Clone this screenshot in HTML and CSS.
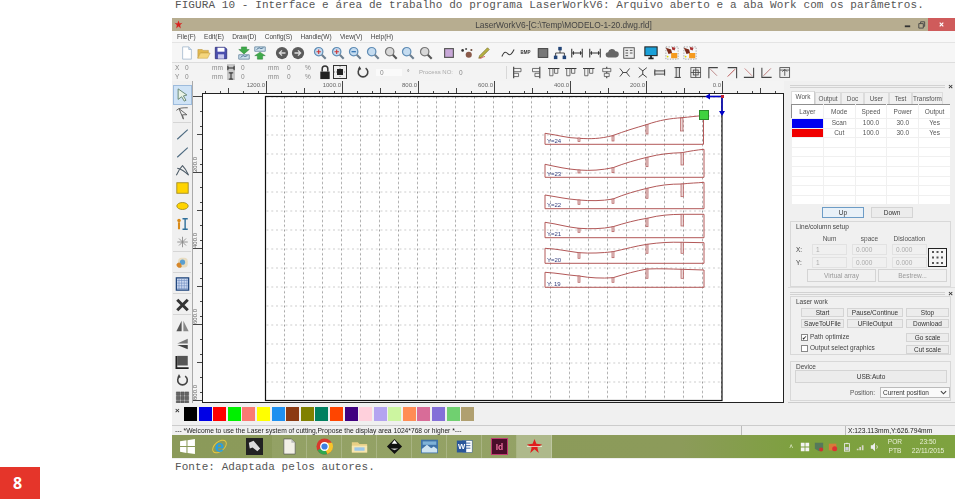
FILE: index.html
```html
<!DOCTYPE html>
<html lang="pt">
<head>
    <meta charset="UTF-8">
    <title>LaserWorkV6</title>
    <link rel="stylesheet" href="styles.css">
</head>
<body>
<svg class="defs" aria-hidden="true">
    <symbol id="i-new" viewBox="0 0 16 16"><path d="M3 1h7l3 3v11H3z" fill="#fff" stroke="#a9bdd0"/><path d="M10 1v3h3" fill="#cfe3f5" stroke="#a9bdd0"/></symbol>
    <symbol id="i-open" viewBox="0 0 16 16"><path d="M1 4h5l1 1h6v3H4l-3 6z" fill="#e2b94f" stroke="#b8923a" stroke-width=".6"/><path d="M4 8h11l-3 6H1z" fill="#f5d67c" stroke="#c9a344" stroke-width=".6"/></symbol>
    <symbol id="i-save" viewBox="0 0 16 16"><path d="M1.500 1.500h11l2 2v11h-13z" fill="#4b4fae" stroke="#33357f"/><rect x="4" y="2" width="8" height="4.500" fill="#fff"/><rect x="4.500" y="9.500" width="7" height="5" fill="#c9c9ee"/></symbol>
    <symbol id="i-imp" viewBox="0 0 16 16"><path d="M5 1h6v3h3l-6 5-6-5h3z" fill="#3faa4a" stroke="#1f7a2c" stroke-width=".5"/><path d="M2 10h12v5H2z" fill="#cfe2ee" stroke="#6c8ba3"/><path d="M4 13l3-2 2 1 3-1" fill="none" stroke="#40688a"/></symbol>
    <symbol id="i-exp" viewBox="0 0 16 16"><path d="M2 1h12v5H2z" fill="#cfe2ee" stroke="#6c8ba3"/><path d="M4 4l3-2 2 1 3-1" fill="none" stroke="#40688a"/><path d="M8 7l6 4h-3v4H5v-4H2z" fill="#3faa4a" stroke="#1f7a2c" stroke-width=".5"/></symbol>
    <symbol id="i-back" viewBox="0 0 16 16"><circle cx="8" cy="8" r="7" fill="#5b5b5b"/><path d="M12 8H5M8 5L5 8l3 3" fill="none" stroke="#ddd" stroke-width="1.500"/></symbol>
    <symbol id="i-fwd" viewBox="0 0 16 16"><circle cx="8" cy="8" r="7" fill="#5b5b5b"/><path d="M4 8h7M8 5l3 3-3 3" fill="none" stroke="#ddd" stroke-width="1.500"/></symbol>
    <symbol id="i-mag" viewBox="0 0 16 16"><circle cx="6.500" cy="6.500" r="4.800" fill="#c5dcf0" stroke="#5f8cb5" stroke-width="1.400"/><path d="M10 10l4.500 4.500" stroke="#6d7f90" stroke-width="2.400"/></symbol>
    <symbol id="i-magp" viewBox="0 0 16 16"><use href="#i-mag"/><path d="M4 6.500h5M6.500 4v5" stroke="#c33" stroke-width="1.200"/></symbol>
    <symbol id="i-magm" viewBox="0 0 16 16"><use href="#i-mag"/><path d="M4 6.500h5" stroke="#2c6fb0" stroke-width="1.400"/></symbol>
    <symbol id="i-magg" viewBox="0 0 16 16"><circle cx="6.500" cy="6.500" r="4.800" fill="#d8d8d8" stroke="#777" stroke-width="1.400"/><path d="M10 10l4.500 4.500" stroke="#555" stroke-width="2.400"/></symbol>
    <symbol id="i-rect" viewBox="0 0 16 16"><rect x="3" y="3" width="10" height="10" fill="#c8a8d8" stroke="#555" stroke-width="1.300"/></symbol>
    <symbol id="i-paw" viewBox="0 0 16 16"><circle cx="10" cy="10" r="3.500" fill="#8a5a4a"/><circle cx="3" cy="5" r="1.500" fill="#333"/><circle cx="7" cy="3.500" r="1.200" fill="#555"/><circle cx="13" cy="4.500" r="1.200" fill="#6a4a3a"/></symbol>
    <symbol id="i-pen" viewBox="0 0 16 16"><path d="M2 14l3-1 9-9-2-2-9 9z" fill="#b8b040" stroke="#6b6620" stroke-width=".7"/><path d="M3 14c3 0 4-2 6-2" fill="none" stroke="#c44" stroke-width="1"/></symbol>
    <symbol id="i-curve" viewBox="0 0 16 16"><path d="M1 12c3-7 5-5 7-3s4 1 7-5" fill="none" stroke="#3a3a3a" stroke-width="1.200"/></symbol>
    <symbol id="i-sq" viewBox="0 0 16 16"><rect x="2.500" y="3" width="11" height="10" fill="#777" stroke="#333"/></symbol>
    <symbol id="i-tree" viewBox="0 0 16 16"><path d="M8 3v5M3 13V8h10v5" fill="none" stroke="#333"/><rect x="6" y="1" width="4" height="4" fill="#247"/><rect x="1" y="11" width="4" height="4" fill="#247"/><rect x="11" y="11" width="4" height="4" fill="#247"/></symbol>
    <symbol id="i-hdim" viewBox="0 0 16 16"><path d="M2 3v10M14 3v10M2 8h12M4 6v4M12 6v4" fill="none" stroke="#333" stroke-width="1.200"/></symbol>
    <symbol id="i-cloud" viewBox="0 0 16 16"><path d="M4 13a3 3 0 0 1-.5-6 4.500 4.500 0 0 1 8.500-1 3.500 3.500 0 0 1 .5 7z" fill="#666"/></symbol>
    <symbol id="i-list" viewBox="0 0 16 16"><rect x="2" y="2" width="12" height="12" fill="#eee" stroke="#444"/><path d="M4 5h3M4 8h3M4 11h3M9 5h3M9 8h3" stroke="#444"/></symbol>
    <symbol id="i-mon" viewBox="0 0 16 16"><rect x="1" y="1" width="14" height="10" fill="#1aa0d8" stroke="#222" stroke-width="1.200"/><path d="M5 14h6M8 11v3" stroke="#222" stroke-width="2"/></symbol>
    <symbol id="i-org" viewBox="0 0 16 16"><path d="M1 1h14v14H1z" fill="none" stroke="#999" stroke-dasharray="1.500 1.500"/><rect x="7" y="8" width="7" height="6" fill="#f59a1e"/><path d="M1 2l6 2 1 4-4 1z" fill="#7b2b1a"/><path d="M8 1l4 1-1 3-3-1z" fill="#a33"/><circle cx="3" cy="12" r="1" fill="#dd0"/></symbol>
    <symbol id="a-1" viewBox="0 0 16 16"><path d="M3 1v14" stroke="#333" stroke-width="1.300"/><path d="M3 3h9v4H3M3 9h6v4H3" fill="none" stroke="#555"/></symbol>
    <symbol id="a-2" viewBox="0 0 16 16"><path d="M13 1v14" stroke="#333" stroke-width="1.300"/><path d="M13 3H4v4h9M13 9H7v4h6" fill="none" stroke="#555"/></symbol>
    <symbol id="a-3" viewBox="0 0 16 16"><path d="M1 3h14" stroke="#333" stroke-width="1.300"/><path d="M3 3v9h4V3M9 3v6h4V3" fill="none" stroke="#555"/></symbol>
    <symbol id="a-4" viewBox="0 0 16 16"><path d="M8 1v14" stroke="#333" stroke-width="1.300"/><path d="M3 3h10v4H3zM5 9h6v4H5z" fill="#eee" stroke="#555"/></symbol>
    <symbol id="a-5" viewBox="0 0 16 16"><path d="M2 3l4 5-4 5M14 3l-4 5 4 5M5 8h6" fill="none" stroke="#444" stroke-width="1.200"/></symbol>
    <symbol id="a-6" viewBox="0 0 16 16"><path d="M3 2l5 4 5-4M3 14l5-4 5 4M8 5v6" fill="none" stroke="#444" stroke-width="1.200"/></symbol>
    <symbol id="a-7" viewBox="0 0 16 16"><path d="M2 4v8M14 4v8" stroke="#333"/><rect x="2" y="6" width="12" height="4" fill="#ddd" stroke="#333"/></symbol>
    <symbol id="a-8" viewBox="0 0 16 16"><path d="M4 2h8M4 14h8" stroke="#333"/><rect x="6" y="2" width="4" height="12" fill="#ddd" stroke="#333"/></symbol>
    <symbol id="a-9" viewBox="0 0 16 16"><rect x="2" y="2" width="12" height="12" fill="#eee" stroke="#444"/><path d="M8 2v12M2 8h12" stroke="#444"/><rect x="5" y="5" width="6" height="6" fill="none" stroke="#444"/></symbol>
    <symbol id="c-1" viewBox="0 0 16 16"><path d="M2 15V2h11" fill="none" stroke="#444" stroke-width="1.300"/><path d="M4 4l8 8" stroke="#b88" stroke-width="1.200"/></symbol>
    <symbol id="c-2" viewBox="0 0 16 16"><path d="M3 2h11v13" fill="none" stroke="#444" stroke-width="1.300"/><path d="M12 4l-9 9" stroke="#b55" stroke-width="1.200"/></symbol>
    <symbol id="c-3" viewBox="0 0 16 16"><path d="M14 2v12H2" fill="none" stroke="#444" stroke-width="1.300"/><path d="M3 3l9 9" stroke="#c88" stroke-width="1.200"/></symbol>
    <symbol id="c-4" viewBox="0 0 16 16"><path d="M2 2v12h12" fill="none" stroke="#444" stroke-width="1.300"/><path d="M13 3l-9 9" stroke="#b77" stroke-width="1.200"/></symbol>
    <symbol id="c-5" viewBox="0 0 16 16"><rect x="2" y="2" width="12" height="12" fill="#eee" stroke="#444"/><path d="M8 12V5M5 7l3-3 3 3M2 5h12" fill="none" stroke="#444"/></symbol>
    <symbol id="t-sel" viewBox="0 0 16 16"><path d="M3 1l10 7-4 1 3 5-2 1-3-5-4 3z" fill="#e9f3e6" stroke="#5e7f6a"/></symbol>
    <symbol id="t-node" viewBox="0 0 16 16"><path d="M4 3l9 7-5 0 1 5-5-12z" fill="#eee" stroke="#555"/><path d="M1 5c3-3 7-3 13-3" fill="none" stroke="#555"/></symbol>
    <symbol id="t-line" viewBox="0 0 16 16"><path d="M2 14L14 3" stroke="#4c6a80" stroke-width="1.300"/></symbol>
    <symbol id="t-cross" viewBox="0 0 16 16"><path d="M1 14C4 7 8 3 8 3s4 4 7 11M2 6c5 1 9 4 13 8" fill="none" stroke="#4c5a66" stroke-width="1.200"/></symbol>
    <symbol id="t-yrect" viewBox="0 0 16 16"><rect x="1.500" y="2" width="13" height="12" fill="#ffd400" stroke="#a08a20"/></symbol>
    <symbol id="t-ell" viewBox="0 0 16 16"><ellipse cx="8" cy="8" rx="6.500" ry="4" fill="#ffd400" stroke="#a08a20"/></symbol>
    <symbol id="t-text" viewBox="0 0 16 16"><circle cx="4" cy="4" r="2" fill="#d98b1a"/><path d="M4 6v8" stroke="#d98b1a" stroke-width="2.400"/><path d="M8 2h6M8 14h6M11 2v12" stroke="#2f6f9a" stroke-width="1.600"/></symbol>
    <symbol id="t-star" viewBox="0 0 16 16"><path d="M8 2v12M2 8h12M4 4l8 8M12 4l-8 8" stroke="#8a8a8a"/></symbol>
    <symbol id="t-pic" viewBox="0 0 16 16"><rect x="3" y="2" width="11" height="11" rx="4" fill="#e8dcc0"/><circle cx="8" cy="7" r="3" fill="#5a9fd0"/><path d="M1 10c2-4 5-3 6 1 1 3-5 4-6-1z" fill="#d6872a"/></symbol>
    <symbol id="t-grid" viewBox="0 0 16 16"><rect x="1" y="1" width="14" height="14" fill="#cfdcf2" stroke="#23487f" stroke-width="1.500"/><path d="M4 2v12M7 2v12M10 2v12M13 2v12M2 4h12M2 7h12M2 10h12M2 13h12" stroke="#6f8cc0" stroke-width=".7"/></symbol>
    <symbol id="t-x" viewBox="0 0 16 16"><path d="M2 2l12 12M14 2L2 14" stroke="#333" stroke-width="3.400"/></symbol>
    <symbol id="t-mir" viewBox="0 0 16 16"><path d="M7 2v12H1z" fill="#555"/><path d="M9 2v12h6z" fill="#888"/></symbol>
    <symbol id="t-mir2" viewBox="0 0 16 16"><path d="M14 2v5.500H2z" fill="#777"/><path d="M14 14V9H2z" fill="#444"/></symbol>
    <symbol id="t-l" viewBox="0 0 16 16"><path d="M2 1h12v11H2z" fill="#555"/><path d="M1 1v14h14" fill="none" stroke="#222" stroke-width="2"/></symbol>
    <symbol id="t-rot" viewBox="0 0 16 16"><path d="M11 3.500a5.500 5.500 0 1 1-6 0" fill="none" stroke="#444" stroke-width="1.800"/><path d="M4 1l2 4-4 0z" fill="#444"/></symbol>
    <symbol id="t-arr" viewBox="0 0 16 16"><path d="M1 1h4v4H1zM6 1h4v4H6zM11 1h4v4h-4zM1 6h4v4H1zM6 6h4v4H6zM11 6h4v4h-4zM1 11h4v4H1zM6 11h4v4H6zM11 11h4v4h-4z" fill="#666" stroke="#333" stroke-width=".5"/></symbol>
</svg>

<div class="page">
    <div class="side">
        <div class="badge">8</div>
    </div>
    <main class="sheet">
        <p class="mono caption">FIGURA 10 - Interface e área de trabalho do programa LaserWorkV6: Arquivo aberto e a aba Work com os parâmetros.</p>

        <div class="window">
            <div class="titlebar">
                <svg class="app-ico" viewBox="0 0 16 16"><path d="M8 1l2 5 5-1-4 4 1 6-4-4-4 4 1-6-4-4 5 1z" fill="#d9221f"/></svg>
                <span class="title">LaserWorkV6-[C:\Temp\MODELO-1-20.dwg.rld]</span>
                <div class="win-btns">
                    <span class="win-btn"><svg viewBox="0 0 10 10"><path d="M2 7h6" stroke="#333" stroke-width="2"/></svg></span>
                    <span class="win-btn"><svg viewBox="0 0 10 10"><path d="M2 4h5v5H2zM4 4V2h4.500v5H7" fill="none" stroke="#444"/></svg></span>
                    <span class="win-btn close"><svg viewBox="0 0 10 10"><path d="M3 3l4 4M7 3L3 7" stroke="#fff" stroke-width="1.300"/></svg></span>
                </div>
            </div>

            <nav class="menu">
                <span>File(F)</span><span>Edit(E)</span><span>Draw(D)</span><span>Config(S)</span><span>Handle(W)</span><span>View(V)</span><span>Help(H)</span>
            </nav>

            <div class="toolbar tb-one">
                <div class="tb-group g-a">
                    <svg class="ico"><use href="#i-new"/></svg><svg class="ico"><use href="#i-open"/></svg><svg class="ico"><use href="#i-save"/></svg>
                </div>
                <div class="tb-group g-b">
                    <svg class="ico"><use href="#i-imp"/></svg><svg class="ico"><use href="#i-exp"/></svg>
                </div>
                <div class="tb-group g-c">
                    <svg class="ico"><use href="#i-back"/></svg><svg class="ico"><use href="#i-fwd"/></svg>
                </div>
                <div class="tb-group g-d">
                    <svg class="ico"><use href="#i-magp"/></svg><svg class="ico"><use href="#i-magp"/></svg><svg class="ico"><use href="#i-magm"/></svg><svg class="ico"><use href="#i-mag"/></svg><svg class="ico"><use href="#i-magg"/></svg><svg class="ico"><use href="#i-mag"/></svg><svg class="ico"><use href="#i-magg"/></svg>
                </div>
                <div class="tb-group g-e">
                    <svg class="ico"><use href="#i-rect"/></svg><svg class="ico"><use href="#i-paw"/></svg><svg class="ico"><use href="#i-pen"/></svg>
                </div>
                <div class="tb-group g-f">
                    <svg class="ico"><use href="#i-curve"/></svg><span class="ico bmp">BMP</span><svg class="ico"><use href="#i-sq"/></svg><svg class="ico"><use href="#i-tree"/></svg><svg class="ico"><use href="#i-hdim"/></svg><svg class="ico"><use href="#i-hdim"/></svg><svg class="ico"><use href="#i-cloud"/></svg><svg class="ico"><use href="#i-list"/></svg>
                </div>
                <div class="tb-group g-g">
                    <svg class="ico"><use href="#i-mon"/></svg>
                </div>
                <div class="tb-group g-h">
                    <svg class="ico"><use href="#i-org"/></svg><svg class="ico"><use href="#i-org"/></svg>
                </div>
            </div>

            <div class="toolbar tb-two">
                <div class="coords">
                    <span>X</span><span>0</span><span>mm</span><svg viewBox="0 0 9 9"><rect width="9" height="9" fill="#c8c8c8"/><path d="M1 4.500h7M1 2v5M8 2v5" stroke="#111"/></svg><span>0</span><span>mm</span><span>0</span><span>%</span>
                    <span>Y</span><span>0</span><span>mm</span><svg viewBox="0 0 9 9"><rect width="9" height="9" fill="#c8c8c8"/><path d="M4.500 1v7M2 1h5M2 8h5" stroke="#111"/></svg><span>0</span><span>mm</span><span>0</span><span>%</span>
                </div>
                <svg class="lock" viewBox="0 0 12 16"><path d="M3 7V4a3 3 0 0 1 6 0v3" fill="none" stroke="#333" stroke-width="1.600"/><rect x="1" y="7" width="10" height="8" fill="#222"/></svg>
                <svg class="centre" viewBox="0 0 14 14"><rect x=".5" y=".5" width="13" height="13" fill="#eee" stroke="#333"/><path d="M1 7h12M7 1v12" stroke="#888" stroke-dasharray="1 1"/><rect x="4" y="4" width="6" height="6" fill="#222"/></svg>
                <svg class="spin" viewBox="0 0 16 16"><use href="#t-rot"/></svg>
                <span class="angle">0</span>
                <span class="deg">°</span>
                <span class="proc-label">Process NO:</span>
                <span class="proc-val">0</span>
                <div class="tb-icons">
                    <svg class="ico"><use href="#a-1"/></svg><svg class="ico"><use href="#a-2"/></svg><svg class="ico"><use href="#a-3"/></svg><svg class="ico"><use href="#a-3"/></svg><svg class="ico"><use href="#a-3"/></svg><svg class="ico"><use href="#a-4"/></svg><svg class="ico"><use href="#a-5"/></svg><svg class="ico"><use href="#a-6"/></svg><svg class="ico"><use href="#a-7"/></svg><svg class="ico"><use href="#a-8"/></svg><svg class="ico"><use href="#a-9"/></svg><svg class="ico"><use href="#c-1"/></svg><svg class="ico"><use href="#c-2"/></svg><svg class="ico"><use href="#c-3"/></svg><svg class="ico"><use href="#c-4"/></svg><svg class="ico"><use href="#c-5"/></svg>
                </div>
            </div>

            <div class="body">
                <div class="tools">
                    <svg class="tool active"><use href="#t-sel"/></svg>
                    <svg class="tool"><use href="#t-node"/></svg>
                    <hr>
                    <svg class="tool"><use href="#t-line"/></svg>
                    <svg class="tool"><use href="#t-line"/></svg>
                    <svg class="tool"><use href="#t-cross"/></svg>
                    <svg class="tool"><use href="#t-yrect"/></svg>
                    <svg class="tool"><use href="#t-ell"/></svg>
                    <svg class="tool"><use href="#t-text"/></svg>
                    <svg class="tool"><use href="#t-star"/></svg>
                    <hr>
                    <svg class="tool"><use href="#t-pic"/></svg>
                    <hr>
                    <svg class="tool"><use href="#t-grid"/></svg>
                    <hr>
                    <svg class="tool"><use href="#t-x"/></svg>
                    <hr>
                    <svg class="tool"><use href="#t-mir"/></svg>
                    <svg class="tool"><use href="#t-mir2"/></svg>
                    <svg class="tool"><use href="#t-l"/></svg>
                    <svg class="tool"><use href="#t-rot"/></svg>
                    <svg class="tool"><use href="#t-arr"/></svg>
                </div>

                <svg class="workspace" viewBox="192 81 592 322">
                    <defs>
                        <pattern id="ticks-h" patternUnits="userSpaceOnUse" x="266" y="81" width="76" height="12">
                            <path d="M.5 0v12M15.500 10v2M30.500 10v2M38.500 7v5M53.500 10v2M68.500 10v2" stroke="#444"/>
                        </pattern>
                        <pattern id="ticks-v" patternUnits="userSpaceOnUse" x="192" y="96" width="10" height="76">
                            <path d="M0 .5h10M8 15.500h2M8 30.500h2M5 38.500h5M8 53.500h2M8 68.500h2" stroke="#444"/>
                        </pattern>
                        <pattern id="dots" patternUnits="userSpaceOnUse" x="266" y="115.500" width="19" height="19">
                            <path d="M.5 0h18.500" stroke="#9c9c9c" stroke-dasharray="2 2.750"/>
                            <path d="M18.500 0v19" stroke="#9c9c9c" stroke-dasharray="2 2.750"/>
                        </pattern>
                    </defs>
                    <rect x="192" y="81" width="592" height="13" fill="#f4f4f4"/>
                    <rect x="192" y="94" width="10" height="309" fill="#f4f4f4"/>
                    <rect x="203" y="81" width="581" height="12" fill="url(#ticks-h)"/>
                    <rect x="192" y="96" width="10" height="307" fill="url(#ticks-v)"/>
                    <path d="M192.500 81v322" stroke="#aaa"/>
                    <g class="rule-label">
                        <text x="265" y="87" text-anchor="end">1200.0</text>
                        <text x="341" y="87" text-anchor="end">1000.0</text>
                        <text x="417" y="87" text-anchor="end">800.0</text>
                        <text x="493" y="87" text-anchor="end">600.0</text>
                        <text x="569" y="87" text-anchor="end">400.0</text>
                        <text x="645" y="87" text-anchor="end">200.0</text>
                        <text x="721" y="87" text-anchor="end">0.0</text>
                        <text transform="translate(197 172) rotate(-90)">200.0</text>
                        <text transform="translate(197 248) rotate(-90)">400.0</text>
                        <text transform="translate(197 324) rotate(-90)">600.0</text>
                        <text transform="translate(197 400) rotate(-90)">800.0</text>
                    </g>
                    <rect x="202.500" y="93.500" width="581" height="309" fill="#fff" stroke="#222"/>
                    <rect x="266" y="97" width="456" height="303" fill="url(#dots)"/>
                    <rect x="265.500" y="96.500" width="456.500" height="304" fill="none" stroke="#111" stroke-width="1.200"/>

                    <g class="part">
                        <path d="M545 133.300C558 135 566 138 579 138.300 590 139 600 139 613 135.500 625 131 635 128 647 124.500 660 120 670 118.500 682 117.700 690 117 696 116 703.500 115.700V144.300H545Z"/>
                        <path d="M545 164.300C558 167 566 169 579 170 590 171 602 170 613 167.700 625 163 636 160 647 157.300 660 154 670 153 682 152.700 690 151 697 150 704 149.300V177.300H545Z"/>
                        <path d="M545 195C558 197 566 199 579 200 590 201 602 201 613 199 625 194 636 191 647 188.300 660 185 670 184 682 184 690 183 697 183 704 182.300V208.700H545Z"/>
                        <path d="M545 222.300C558 224 566 227 579 228.300 590 229 602 229 613 226.700 625 223 636 220 647 218.300 660 215 670 214.500 682 214.300H704V237.700H545Z"/>
                        <path d="M545 248.300C558 249 566 251 579 252.700 590 253.500 602 253 613 251.700 625 249 636 246 647 244.300 660 242.500 670 242 682 242.300L704 242.700V263.300H545Z"/>
                        <path d="M545 272.300C558 273 566 275 579 276 590 278 602 278.500 613 277.700 625 274 636 271 647 269 660 268.500 670 269 682 269.300L704 270V287.300H545Z"/>
                    </g>
                    <g class="notch">
                        <rect x="578" y="138" width="2" height="3.600"/><rect x="612" y="136" width="2" height="5"/><rect x="646" y="124.500" width="2" height="9.500"/><rect x="680.500" y="118" width="2.500" height="13"/>
                        <rect x="578" y="170" width="2" height="3"/><rect x="612" y="167.700" width="2" height="5"/><rect x="646" y="157.300" width="2" height="9.400"/><rect x="681" y="152.700" width="2.500" height="12.300"/>
                        <rect x="578" y="200" width="2" height="4.300"/><rect x="612" y="199" width="2" height="4.300"/><rect x="646" y="188.300" width="2" height="10"/><rect x="681" y="184" width="2.500" height="12.700"/>
                        <rect x="578" y="228.300" width="2" height="4"/><rect x="612" y="226.700" width="2" height="5"/><rect x="646" y="218.300" width="2" height="8.400"/><rect x="681" y="214.300" width="2.500" height="11.700"/>
                        <rect x="578" y="252.700" width="2" height="5.600"/><rect x="612" y="251.700" width="2" height="6"/><rect x="646" y="244.300" width="2" height="9"/><rect x="681" y="242.300" width="2.500" height="11"/>
                        <rect x="578" y="276" width="2" height="6.300"/><rect x="612" y="277.700" width="2" height="4.600"/><rect x="646" y="269" width="2" height="9.300"/><rect x="681" y="269.300" width="2.500" height="9"/>
                    </g>
                    <g class="part-label">
                        <text x="547" y="143">Y=24</text>
                        <text x="547" y="176">Y=23</text>
                        <text x="547" y="207">Y=22</text>
                        <text x="547" y="236">Y=21</text>
                        <text x="547" y="262">Y=20</text>
                        <text x="547" y="286">Y: 19</text>
                    </g>
                    <rect x="699.500" y="110.500" width="9" height="9" fill="#3fd23f" stroke="#2a8a2a"/>
                    <path d="M722 96.500H708M722 96.500V112" fill="none" stroke="#0000c8" stroke-width="1.400"/>
                    <path d="M705 96.500l5-3v6zM722 116l-3-5h6z" fill="#0000c8"/>
                    <rect x="721" y="95" width="3" height="3" fill="#c02030"/>
                </svg>

                <aside class="dock">
                    <section class="pane pane-top">
                        <div class="grip"><i></i><b>×</b></div>
                        <div class="tabs">
                            <span class="tab on">Work</span><span class="tab t-out">Output</span><span class="tab t-doc">Doc</span><span class="tab t-user">User</span><span class="tab t-test">Test</span><span class="tab t-trans">Transform</span>
                        </div>
                        <table class="layers">
                            <thead>
                                <tr><th>Layer</th><th>Mode</th><th>Speed</th><th>Power</th><th>Output</th></tr>
                            </thead>
                            <tbody>
                                <tr><td class="blue"></td><td>Scan</td><td>100.0</td><td>30.0</td><td>Yes</td></tr>
                                <tr><td class="red"></td><td>Cut</td><td>100.0</td><td>30.0</td><td>Yes</td></tr>
                                <tr><td></td><td></td><td></td><td></td><td></td></tr>
                                <tr><td></td><td></td><td></td><td></td><td></td></tr>
                                <tr><td></td><td></td><td></td><td></td><td></td></tr>
                                <tr><td></td><td></td><td></td><td></td><td></td></tr>
                                <tr><td></td><td></td><td></td><td></td><td></td></tr>
                                <tr><td></td><td></td><td></td><td></td><td></td></tr>
                                <tr><td></td><td></td><td></td><td></td><td></td></tr>
                            </tbody>
                        </table>
                        <div class="updown">
                            <button class="focus">Up</button>
                            <button>Down</button>
                        </div>
                        <div class="box linecol">
                            <span class="box-title">Line/column setup</span>
                            <div class="lc-grid">
                                <span></span><span class="lc-head">Num</span><span class="lc-head">space</span><span class="lc-head">Dislocation</span>
                                <span class="lc-axis">X:</span><span class="field">1</span><span class="field">0.000</span><span class="field">0.000</span>
                                <span class="lc-axis">Y:</span><span class="field">1</span><span class="field">0.000</span><span class="field">0.000</span>
                            </div>
                            <svg class="lc-ico" viewBox="0 0 19 19"><rect x=".5" y=".5" width="18" height="18" fill="#f4f4f4" stroke="#222"/><path d="M4 3h2v2H4zM8.500 3h2v2h-2zM13 3h2v2h-2zM4 8.500h2v2H4zM8.500 8.500h2v2h-2zM13 8.500h2v2h-2zM4 14h2v2H4zM8.500 14h2v2h-2zM13 14h2v2h-2z" fill="#555"/></svg>
                            <div class="lc-btns">
                                <button disabled>Virtual array</button>
                                <button disabled>Bestrew...</button>
                            </div>
                        </div>
                    </section>
                    <section class="pane pane-bottom">
                        <div class="grip"><i></i><b>×</b></div>
                        <div class="box laser">
                            <span class="box-title">Laser work</span>
                            <div class="laser-grid">
                                <button>Start</button><button>Pause/Continue</button><button>Stop</button>
                                <button>SaveToUFile</button><button>UFileOutput</button><button>Download</button>
                            </div>
                            <div class="laser-low">
                                <div class="checks">
                                    <label><span class="check on">✔</span>Path optimize</label>
                                    <label><span class="check"></span>Output select graphics</label>
                                </div>
                                <div class="scales">
                                    <button>Go scale</button>
                                    <button>Cut scale</button>
                                </div>
                            </div>
                        </div>
                        <div class="box device">
                            <span class="box-title">Device</span>
                            <button class="usb">USB:Auto</button>
                            <div class="pos">
                                <span>Position:</span>
                                <span class="select">Current position<svg viewBox="0 0 8 8"><path d="M1 2.500l3 3 3-3" fill="none" stroke="#444" stroke-width="1.300"/></svg></span>
                            </div>
                        </div>
                    </section>
                </aside>
            </div>

            <div class="swatches">
                <span class="sw-close">×</span>
                <i style="background:#000"></i><i style="background:#0000e6"></i><i style="background:#f00"></i><i style="background:#00f000"></i><i style="background:#fa7a72"></i><i style="background:#ffff00"></i><i style="background:#1e90f0"></i><i style="background:#8b3a12"></i><i style="background:#808000"></i><i style="background:#008060"></i><i style="background:#ff4500"></i><i style="background:#400080"></i><i style="background:#ffd0dc"></i><i style="background:#b4a4f0"></i><i style="background:#ccf5a0"></i><i style="background:#ff8c55"></i><i style="background:#d86c98"></i><i style="background:#8470d8"></i><i style="background:#70d070"></i><i style="background:#b0a070"></i>
            </div>

            <div class="status">
                <span class="st-msg">--- *Welcome to use the Laser system of cutting,Propose the display area 1024*768 or higher *---</span>
                <span class="st-mid"></span>
                <span class="st-pos">X:123.113mm,Y:626.794mm</span>
            </div>

            <div class="taskbar">
                <span class="task start"><svg viewBox="0 0 16 16"><path d="M1 3l6-1v5.500H1zM8 2l7-1v6.500H8zM1 8.500h6V14l-6-1zM8 8.500h7V15l-7-1z" fill="#fff"/></svg></span>
                <span class="task"><svg viewBox="0 0 18 18"><ellipse cx="9" cy="9" rx="8.500" ry="5" fill="none" stroke="#e8c840" transform="rotate(-40 9 9)"/><text class="ie" x="9" y="14.500" text-anchor="middle">e</text></svg></span>
                <span class="task"><svg viewBox="0 0 18 18"><rect width="18" height="18" fill="#222"/><path d="M3 5l5-2 7 8-3 3-5-4-3 1z" fill="#ddd"/></svg></span>
                <span class="task btn"><svg viewBox="0 0 16 18"><path d="M2 1h8l4 4v12H2z" fill="#f2f0e6" stroke="#555" stroke-width=".7"/><path d="M10 1v4h4" fill="#bbb"/></svg></span>
                <span class="task btn"><svg viewBox="0 0 18 18"><circle cx="9" cy="9" r="8.500" fill="#d9382c"/><path d="M9 9L1.500 13A8.500 8.500 0 0 0 12 17z" fill="#2fa84f"/><path d="M9 9l3 8A8.500 8.500 0 0 0 17 5H9z" fill="#f7c52b"/><circle cx="9" cy="9" r="4" fill="#3d7fe0" stroke="#fff" stroke-width="1.400"/></svg></span>
                <span class="task btn"><svg viewBox="0 0 20 16"><path d="M1 3h7l2 2h9v10H1z" fill="#e8cf85"/><path d="M1 7h18v8H1z" fill="#f7e6b0"/><rect x="4" y="9" width="12" height="4" fill="#9cc7e8"/></svg></span>
                <span class="task btn"><svg viewBox="0 0 18 18"><path d="M9 1l8 8-8 8-8-8z" fill="#111"/><path d="M9 2l3 4H6z" fill="#fff"/><path d="M5 11h8l-4 2z" fill="#ccc"/></svg></span>
                <span class="task btn"><svg viewBox="0 0 20 16"><rect width="20" height="16" fill="#3f72a8"/><path d="M1 11l6-5 5 4 3-2 4 3v4H1z" fill="#cfe4f2"/><rect x="2" y="2" width="16" height="4" fill="#7fb2d8"/></svg></span>
                <span class="task btn"><svg viewBox="0 0 20 18"><rect x="8" y="2" width="11" height="14" fill="#fff" stroke="#2a5699" stroke-width=".6"/><path d="M11 5h6M11 8h6M11 11h6" stroke="#2a5699"/><rect x="1" y="2" width="11" height="14" fill="#2a5699"/><text class="word" x="6.500" y="12.500" text-anchor="middle">W</text></svg></span>
                <span class="task btn"><svg viewBox="0 0 18 18"><rect x=".5" y=".5" width="17" height="17" fill="#4a0d2a" stroke="#c23a72"/><text class="indd" x="9" y="12.500" text-anchor="middle">Id</text></svg></span>
                <span class="task btn on"><svg viewBox="0 0 18 18"><path d="M9 1l2 5 6 1-5 3 1.500 6L9 12l-4.500 4L6 10 1 7l6-1z" fill="#e01e1e"/><path d="M1 9h16" stroke="#f3f0e0" stroke-width=".8"/></svg></span>
                <div class="tray">
                    <span class="tray-up">˄</span>
                    <svg viewBox="0 0 12 12"><path d="M1 1h4.500v4.500H1zM6.500 1H11v4.500H6.500zM1 6.500h4.500V11H1zM6.500 6.500H11V11H6.500z" fill="#f4f4f4"/></svg>
                    <svg viewBox="0 0 12 12"><path d="M1 1h10v7l-5 3-5-3z" fill="#557a5a"/><circle cx="8.500" cy="9" r="2.500" fill="#c33"/></svg>
                    <svg viewBox="0 0 12 12"><path d="M1 2h9v8H1z" fill="#d97a3a"/><circle cx="8" cy="8" r="3" fill="#d33"/></svg>
                    <svg viewBox="0 0 8 12"><rect x="1" y="2" width="6" height="9" fill="none" stroke="#eee"/><rect x="3" y="1" width="2" height="1" fill="#eee"/><rect x="2" y="6" width="4" height="4" fill="#ccd"/></svg>
                    <svg viewBox="0 0 12 12"><path d="M1 10h2V8H1zM4 10h2V6H4zM7 10h2V4H7z" fill="#d8d8c8"/></svg>
                    <svg viewBox="0 0 12 12"><path d="M1 4h2l3-3v10L3 8H1z" fill="#eee"/><path d="M8 4c1 1 1 3 0 4" fill="none" stroke="#eee"/></svg>
                    <div class="lang"><span>POR</span><span>PTB</span></div>
                    <div class="clock"><span>23:50</span><span>22/11/2015</span></div>
                </div>
            </div>
        </div>

        <p class="mono source">Fonte: Adaptada pelos autores.</p>
    </main>
</div>
</body>
</html>
```

FILE: styles.css
```css
* {
    box-sizing: border-box;
}

body {
    margin: 0;
    background-color: #fff;
    font-family: "Liberation Sans", Arial, sans-serif;
    overflow: hidden;
}

.defs {
    position: absolute;
    width: 0;
    height: 0;
}

.page {
    display: grid;
    grid-template-columns: 172px 783px;
    height: 502px;
}

/* page number */
.side {
    display: flex;
    align-items: flex-end;
    padding-bottom: 3px;
}

.badge {
    width: 40px;
    height: 32px;
    line-height: 32px;
    padding-right: 5px;
    background-color: #e5352a;
    color: #fff;
    font-family: "Open Sans", sans-serif;
    font-weight: 700;
    font-size: 16px;
    text-align: center;
}

.mono {
    font-family: "Liberation Mono", monospace;
    font-size: 11px;
    line-height: 12px;
    color: #555;
    margin: 0;
    padding-left: 3px;
    white-space: nowrap;
}

.caption {
    letter-spacing: .085px;
    height: 19px;
    margin-top: -1px;
}

.source {
    margin-top: 2px;
    letter-spacing: .06px;
}

.window {
    height: 441px;
    display: flex;
    flex-direction: column;
    background-color: #f0f0f0;
    font-size: 6.500px;
    color: #333;
    filter: blur(.4px);
}

/* title bar */
.titlebar {
    height: 13px;
    flex: none;
    display: flex;
    align-items: center;
    background-color: #b7ad90;
}

.app-ico {
    width: 9px;
    height: 9px;
    margin-left: 2px;
}

.title {
    flex: 1;
    padding-left: 44px;
    text-align: center;
    font-size: 8.400px;
    color: #444;
}

.win-btns {
    display: flex;
    height: 100%;
}

.win-btn {
    width: 14px;
    display: flex;
    align-items: center;
    justify-content: center;
}

.win-btn svg {
    width: 9px;
    height: 9px;
}

.win-btn.close {
    width: 27px;
    background-color: #cf5b5b;
}

.menu {
    height: 11px;
    flex: none;
    display: flex;
    align-items: center;
    gap: 8.300px;
    padding-left: 5px;
    background-color: #f8f8f8;
    color: #444;
    font-size: 6.500px;
    white-space: nowrap;
}

/* toolbars */
.toolbar {
    display: flex;
    align-items: center;
    flex: none;
}

.tb-one {
    height: 20px;
    padding-left: 7px;
    background-color: #f6f6f6;
    border-top: 1px solid #e4e4e4;
}

.tb-two {
    height: 19px;
    padding-left: 3px;
    border-top: 1px solid #ddd;
    background-color: #f3f3f3;
}

.tb-group {
    display: flex;
    align-items: center;
}

.ico {
    width: 16px;
    height: 16px;
    flex: none;
}

.tb-one .ico {
    width: 14px;
    height: 14px;
    margin: 0 1px;
}

.bmp {
    font-size: 4.500px;
    font-weight: 700;
    line-height: 14px;
    text-align: center;
    color: #333;
}

.g-a { gap: 1px; }
.g-b { margin-left: 7px; }
.g-c { margin-left: 6px; }
.g-d { margin-left: 6px; gap: 1.700px; }
.g-e { margin-left: 7px; gap: 1.500px; }
.g-f { margin-left: 8px; gap: 1.300px; }
.g-g { margin-left: 6px; }
.g-h { margin-left: 5px; gap: 2px; }

.coords {
    display: grid;
    grid-template-columns: 10px 27px 15px 14px 27px 19px 18px 12px;
    grid-auto-rows: 8.500px;
    align-items: center;
    font-size: 6.500px;
    color: #888;
}

.coords svg {
    width: 8px;
    height: 8px;
}

.lock {
    width: 12px;
    height: 15px;
    margin-left: 2px;
}

.centre {
    width: 14px;
    height: 14px;
    margin-left: 2px;
}

.spin {
    width: 14px;
    height: 14px;
    margin-left: 9px;
}

.angle {
    width: 26px;
    margin-left: 6px;
    padding-left: 4px;
    font-size: 6.500px;
    color: #888;
    background-color: #fafafa;
}

.deg {
    margin-left: 5px;
    width: 8px;
    color: #666;
}

.proc-label {
    margin-left: 4px;
    width: 36px;
    font-size: 6px;
    color: #aaa;
    white-space: nowrap;
}

.proc-val {
    margin-left: 4px;
    width: 40px;
    font-size: 6.500px;
    color: #888;
}

.tb-icons {
    display: flex;
    gap: 2.300px;
    margin-left: 7px;
    padding-left: 3px;
    border-left: 1px solid #d8d8d8;
}

.tb-icons .ico {
    width: 15.500px;
    height: 13px;
}

/* work area */
.body {
    height: 322px;
    flex: none;
    display: flex;
}

.tools {
    width: 20px;
    flex: none;
    display: flex;
    flex-direction: column;
    align-items: center;
    padding-top: 5px;
}

.tool {
    width: 15px;
    height: 18px;
    padding: 2px 0;
    flex: none;
}

.tool.active {
    width: 17px;
    background-color: #cfe3f6;
    outline: 1px solid #9dbbdc;
}

.tools hr {
    width: 18px;
    height: 3px;
    margin: 0;
    border: 0;
    border-top: 1px solid #d5d5d5;
    flex: none;
}

.workspace {
    width: 592px;
    height: 322px;
    flex: none;
}

.rule-label text {
    font-size: 6px;
    fill: #666;
}

.part path {
    fill: none;
    stroke: #b25858;
    stroke-width: 1;
}

.notch rect {
    fill: #e9d6d6;
    stroke: #b25858;
    stroke-width: .7;
}

.part-label text {
    font-size: 6px;
    fill: #35407f;
}

/* right dock */
.dock {
    width: 167px;
    margin-left: 4px;
    flex: none;
    display: flex;
    flex-direction: column;
}

.pane {
    padding: 0 2px;
}

.pane-top {
    height: 207px;
    border-bottom: 1px solid #ddd;
}

.pane-bottom {
    height: 115px;
    border-bottom: 1px solid #ccc;
}

.grip {
    height: 10px;
    display: flex;
    align-items: center;
    gap: 3px;
}

.grip i {
    flex: 1;
    height: 3px;
    border: 1px solid #d2d2d2;
    border-width: 1px 0;
}

.grip b {
    font-size: 8px;
    color: #333;
}

.tabs {
    display: flex;
    height: 13px;
    align-items: flex-end;
    padding-left: 1px;
    font-size: 6.400px;
}

.tab {
    width: 24px;
    height: 12px;
    line-height: 11px;
    text-align: center;
    border: 1px solid #dcdcdc;
    border-bottom: 0;
    background-color: #f0f0f0;
    color: #555;
}

.tab.on {
    height: 13px;
    background-color: #fff;
    border-right-color: #ccc;
    line-height: 10px;
}

.t-out { width: 26px; }
.t-doc { width: 23px; }
.t-user { width: 25px; }
.t-test { width: 23px; }
.t-trans { width: 31px; }

.layers {
    width: 160px;
    margin-left: 1px;
    height: 101px;
    table-layout: fixed;
    border-collapse: collapse;
    background-color: #fff;
    border: 1px solid #8e8e8e;
    font-size: 6.500px;
    color: #555;
}

.layers th {
    height: 14px;
    padding: 0;
    font-weight: 400;
    border-right: 1px solid #f0f0f0;
}

.layers td {
    height: 9.600px;
    padding: 0;
    line-height: 8px;
    text-align: center;
    border: 1px solid #f0f0f0;
}

.layers .blue {
    background-color: #0000f0;
}

.layers .red {
    background-color: #f00000;
}

button {
    height: 10px;
    padding: 0;
    font: inherit;
    color: #333;
    background-color: #ececec;
    border: 1px solid #d4d4d4;
    white-space: nowrap;
}

button:disabled {
    color: #999;
    background-color: #f0f0f0;
}

.updown {
    display: flex;
    gap: 7px;
    padding-left: 32px;
    margin-top: 2px;
}

.updown button {
    width: 42px;
    height: 11px;
    line-height: 9px;
}

.updown .focus {
    background-color: #e9f1f8;
    border-color: #6d9cc6;
}

.box {
    position: relative;
    margin-top: 3px;
    border: 1px solid #d8d8d8;
}

.box-title {
    display: block;
    padding-left: 5px;
    line-height: 9px;
    color: #444;
}

.linecol {
    height: 66px;
    width: 161px;
}

.lc-grid {
    display: grid;
    grid-template-columns: 16px 35px 35px 35px;
    grid-template-rows: 10px 13px 13px;
    column-gap: 5px;
    margin-top: 2px;
    align-items: center;
}

.lc-head {
    text-align: center;
    color: #555;
}

.lc-axis {
    padding-left: 5px;
    color: #444;
}

.field {
    height: 11px;
    line-height: 10px;
    padding-left: 3px;
    border: 1px solid #e2e2e2;
    color: #aaa;
}

/* sits beside the fields, outside their grid */
.lc-ico {
    position: absolute;
    left: 137px;
    top: 26px;
    width: 19px;
    height: 19px;
}

.lc-btns {
    display: flex;
    gap: 2px;
    padding-left: 16px;
}

.lc-btns button {
    width: 69px;
    height: 13px;
}

.laser {
    margin-top: -2px;
    height: 59px;
    width: 161px;
}

.laser-grid {
    display: grid;
    grid-template-columns: 43px 56px 43px;
    grid-auto-rows: 9px;
    gap: 2px 3px;
    padding-left: 10px;
    margin-top: 2px;
}

.laser-grid button,
.scales button {
    height: 9px;
    line-height: 7px;
}

.laser-low {
    display: flex;
    justify-content: space-between;
    padding: 5px 0 0 10px;
}

.checks {
    display: flex;
    flex-direction: column;
    gap: 3px;
    color: #444;
}

.checks label {
    display: flex;
    align-items: center;
    gap: 2px;
    line-height: 8px;
}

.check {
    width: 7px;
    height: 7px;
    line-height: 6px;
    font-size: 6px;
    text-align: center;
    color: #222;
    border: 1px solid #888;
    background-color: #fff;
}

.scales {
    display: flex;
    flex-direction: column;
    gap: 3px;
    padding-right: 1px;
}

.scales button {
    width: 43px;
}

.device {
    margin-top: 6px;
    height: 40px;
    width: 161px;
}

.usb {
    display: block;
    width: 152px;
    height: 13px;
    margin: -1px 0 0 4px;
}

.pos {
    display: flex;
    justify-content: flex-end;
    align-items: center;
    gap: 5px;
    margin-top: 4px;
    color: #555;
}

.select {
    width: 70px;
    height: 11px;
    display: flex;
    justify-content: space-between;
    align-items: center;
    padding: 0 2px;
    border: 1px solid #bbb;
    background-color: #fafafa;
    color: #333;
}

.select svg {
    width: 7px;
    height: 7px;
}

/* colour bar */
.swatches {
    height: 22px;
    flex: none;
    display: flex;
    gap: 1.600px;
    padding: 4px 0 4px 3px;
    background-color: #f0f0f0;
}

.sw-close {
    width: 7.400px;
    font-size: 8px;
    line-height: 8px;
    font-weight: 700;
}

.swatches i {
    width: 13px;
}

.status {
    height: 10px;
    flex: none;
    display: flex;
    font-size: 6.700px;
    line-height: 9px;
    background-color: #f0f0f0;
    border-top: 1px solid #ccc;
    color: #222;
    white-space: nowrap;
}

.st-msg {
    width: 570px;
    padding-left: 3px;
    border-right: 1px solid #bbb;
}

.st-mid {
    width: 104px;
    border-right: 1px solid #bbb;
}

.st-pos {
    padding-left: 2px;
}

/* windows taskbar */
.taskbar {
    height: 23px;
    flex: none;
    display: flex;
    background: linear-gradient(90deg, #8b9a5a 0%, #8c9b5a 65%, #7da03e 80%, #7ea23f 100%);
}

.task {
    width: 35px;
    display: flex;
    align-items: center;
    justify-content: center;
}

.task svg {
    width: 17px;
    height: 17px;
}

.task.start {
    width: 30px;
}

.task.btn {
    background-color: rgba(255, 255, 255, .07);
    border-right: 1px solid rgba(255, 255, 255, .2);
}

.task.on {
    background-color: rgba(255, 255, 255, .3);
}

.ie {
    font-size: 18px;
    font-weight: 700;
    fill: #2a9fe0;
}

.word {
    font-size: 9px;
    font-weight: 700;
    fill: #fff;
}

.indd {
    font-size: 9px;
    font-weight: 700;
    fill: #f070a0;
}

.tray {
    display: flex;
    align-items: center;
    margin-left: auto;
    gap: 4px;
    padding-right: 9px;
    color: #eaf0d8;
    font-size: 6.600px;
}

.tray svg {
    width: 10px;
    height: 10px;
}

.tray-up {
    margin-right: 3px;
}

.lang,
.clock {
    display: flex;
    flex-direction: column;
    align-items: center;
    gap: 1px;
    line-height: 8px;
}

.lang {
    width: 22px;
}

.clock {
    width: 36px;
}
```
